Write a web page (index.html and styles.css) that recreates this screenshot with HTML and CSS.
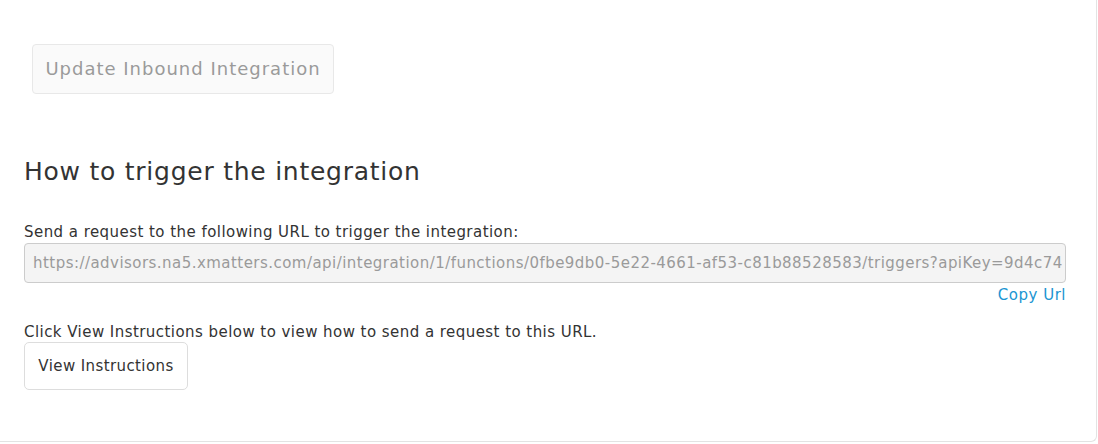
FILE: index.html
```html
<!DOCTYPE html>
<html>
<head>
<meta charset="utf-8">
<link rel="stylesheet" href="styles.css">
</head>
<body>
<div class="card">
  <div class="actions">
    <button class="btn-update" disabled>Update Inbound Integration</button>
  </div>
  <section class="trigger">
    <h2 class="title">How to trigger the integration</h2>
    <p class="label">Send a request to the following URL to trigger the integration:</p>
    <div class="url-box">https://advisors.na5.xmatters.com/api/integration/1/functions/0fbe9db0-5e22-4661-af53-c81b88528583/triggers?apiKey=9d4c74</div>
    <div class="copy-row"><a class="copy-link" href="#">Copy Url</a></div>
    <p class="hint">Click View Instructions below to view how to send a request to this URL.</p>
    <button class="btn-view">View Instructions</button>
  </section>
</div>
</body>
</html>
```

FILE: styles.css
```css
html, body {
  margin: 0;
  padding: 0;
  background: #ffffff;
}
body {
  font-family: "DejaVu Sans", "Open Sans", sans-serif;
  color: #333333;
  letter-spacing: 0.45px;
}
.card {
  box-sizing: border-box;
  width: 1097px;
  height: 442px;
  padding: 0 30px 0 24px;
  border-right: 1px solid #e3e3e3;
  border-bottom: 1px solid #e3e3e3;
  border-bottom-right-radius: 6px;
  background: #ffffff;
}
.actions {
  padding-top: 44px;
  padding-left: 8px;
}
.btn-update {
  width: 302px;
  height: 50px;
  background: #fafafa;
  border: 1px solid #e8e8e8;
  border-radius: 4px;
  color: #9a9a9a;
  font-family: inherit;
  font-size: 18px;
  letter-spacing: 1px;
  line-height: 46px;
  padding: 0;
}
.trigger {
  padding-top: 62px;
}
.title {
  margin: 0;
  font-size: 25px;
  font-weight: 400;
  line-height: 32px;
  letter-spacing: 0.75px;
  color: #333333;
}
.label {
  margin: 34px 0 0;
  font-size: 15px;
  line-height: 20px;
}
.url-box {
  margin-top: 1px;
  height: 40px;
  box-sizing: border-box;
  border: 1px solid #cccccc;
  border-radius: 4px;
  background: #f4f4f4;
  color: #9a9a9a;
  font-size: 15px;
  line-height: 38px;
  letter-spacing: 0.46px;
  padding: 0 0 0 8px;
  white-space: nowrap;
  overflow: hidden;
}
.copy-row {
  display: flex;
  justify-content: flex-end;
  margin-top: 2px;
}
.copy-link {
  color: #1b95d2;
  text-decoration: none;
  font-size: 15px;
  line-height: 20px;
  letter-spacing: 0.5px;
}
.hint {
  margin: 17px 0 0;
  font-size: 15px;
  line-height: 20px;
}
.btn-view {
  margin-top: 0;
  width: 164px;
  height: 48px;
  background: #ffffff;
  border: 1px solid #dddddd;
  border-radius: 5px;
  color: #333333;
  font-family: inherit;
  font-size: 15px;
  letter-spacing: 0.4px;
  padding: 0;
}
```
